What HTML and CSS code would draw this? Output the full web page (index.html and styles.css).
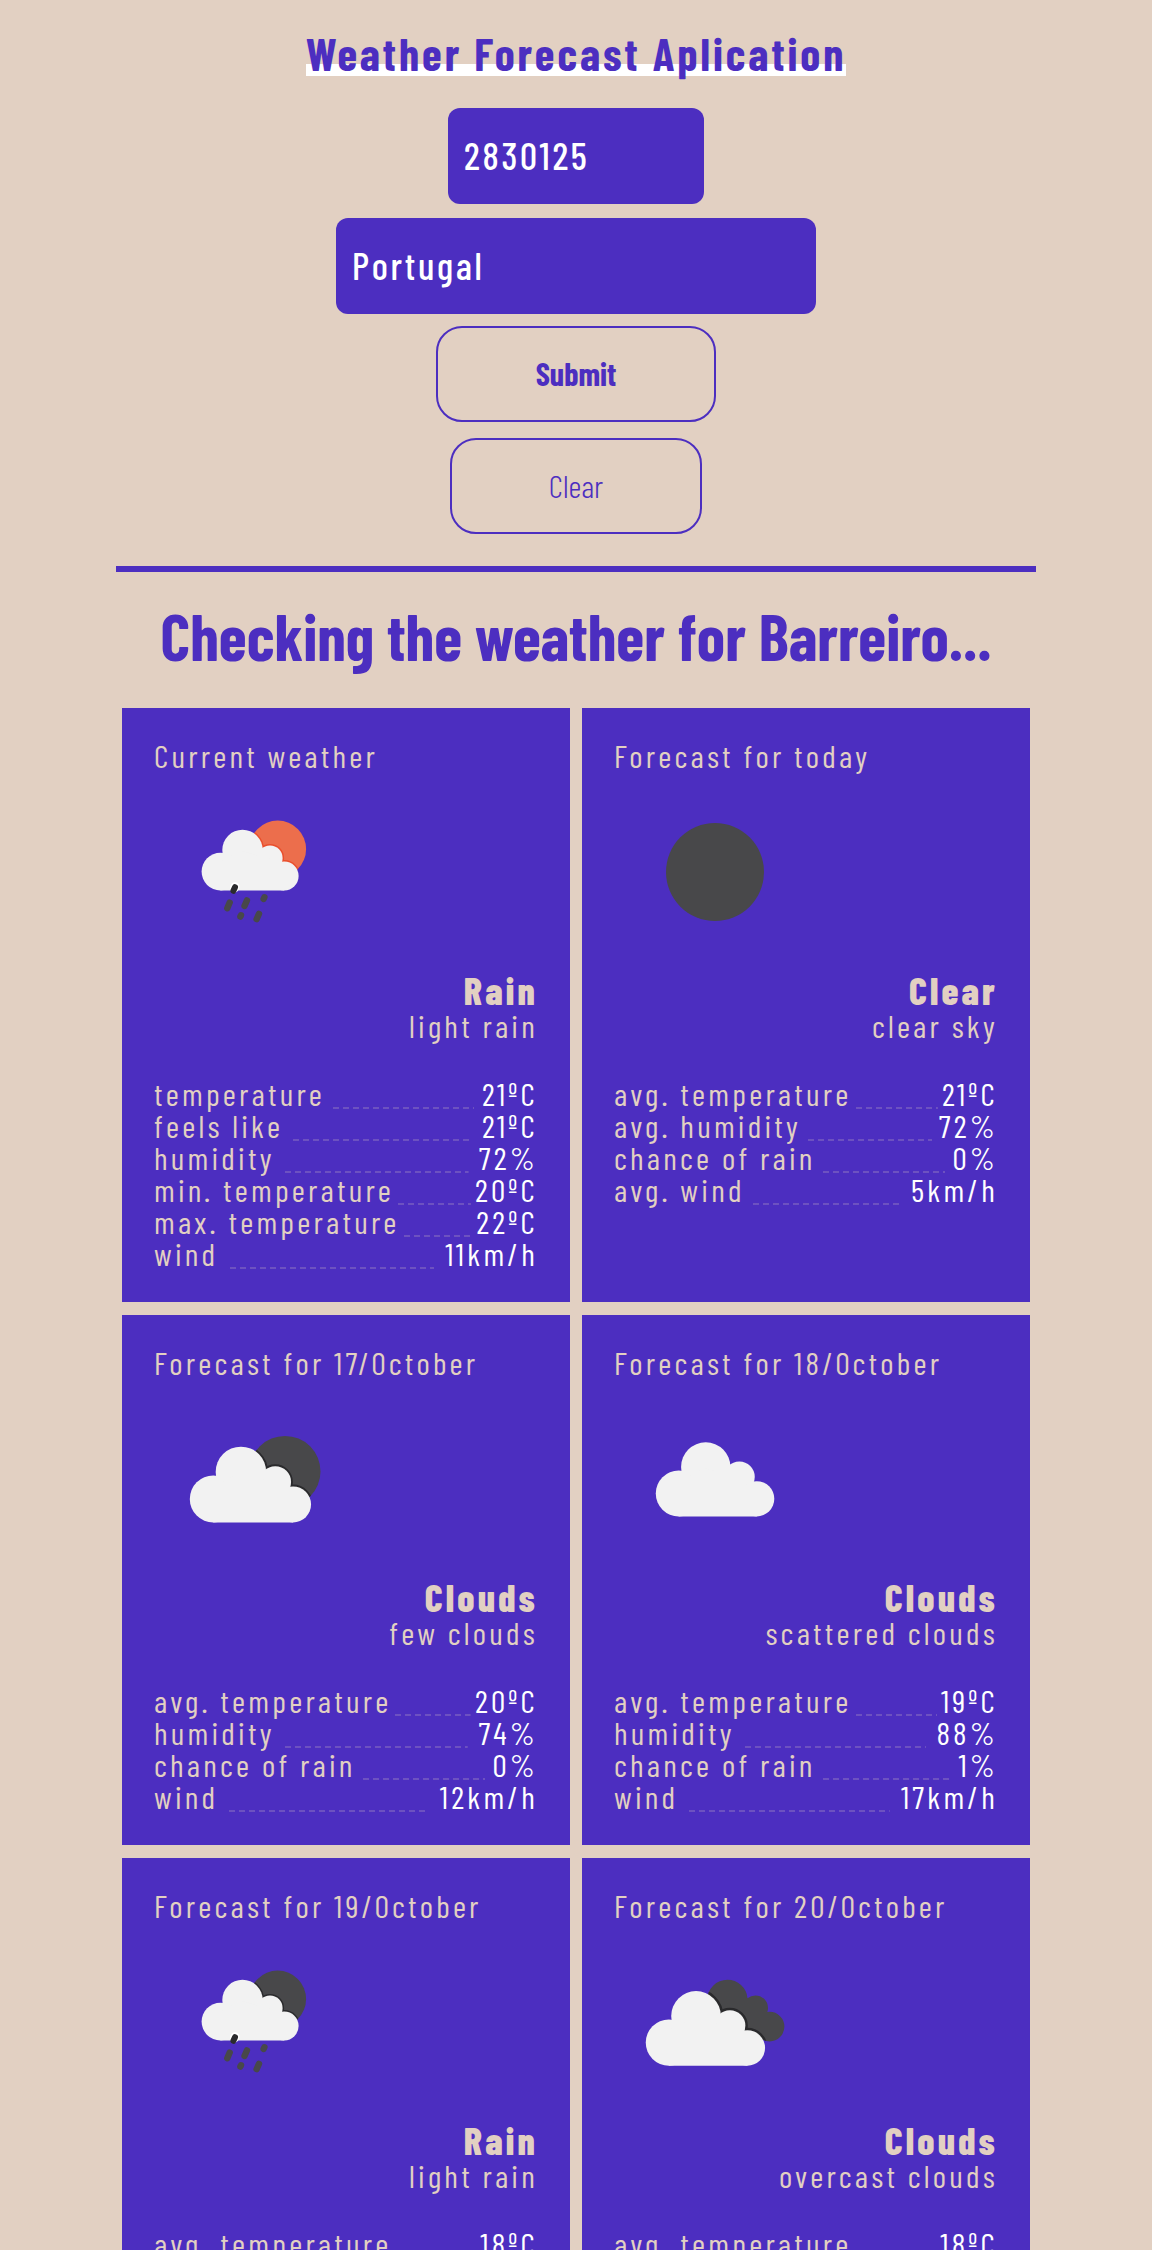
FILE: index.html
```
<!DOCTYPE html>
<html lang="en">
<head>
  <meta charset="utf-8">
  <meta name="viewport" content="width=device-width, initial-scale=1">
  <title>Weather Forecast Aplication</title>
  <link rel="stylesheet" href="styles.css">
</head>
<body>
  <svg class="defs" aria-hidden="true">
    <defs>
      <g id="cloud">
        <circle cx="66.4" cy="100.6" r="18.8"/>
        <circle cx="88.5" cy="79" r="20.2"/>
        <circle cx="116" cy="87" r="12.6"/>
        <circle cx="130.2" cy="105" r="14.4"/>
        <path d="M66.4 119.4V90L88 80L116 88L130.2 100V119.4Z"/>
      </g>
      <g id="drops" fill="none" stroke="#48484a" stroke-width="6.4" stroke-linecap="round">
        <path stroke="#fff" stroke-width="9" d="M81 115.6l-.6 1.4"/>
        <path stroke="#2a2a2c" stroke-width="6" d="M81 116.2l-1.6 3.6"/>
        <path d="M75.7 131.6l-2.4 5.6M92.9 129.4l-2.4 5.6M110.4 126.2l-.8 1.8M87 144.2l-.6 1.4M105 142.8l-2.4 5.4"/>
      </g>
      <clipPath id="sun-small"><circle cx="123.7" cy="78" r="28.4"/></clipPath>
      <clipPath id="sun-large"><circle cx="131" cy="93.4" r="35.5"/></clipPath>
      <clipPath id="cloud-back">
        <circle cx="113.4" cy="79" r="20.2"/><circle cx="141.4" cy="87" r="12.6"/><circle cx="155.6" cy="105.6" r="14.8"/>
        <path d="M91 119V90L113 80L141 88L155 100V119Z"/>
      </clipPath>
    </defs>
  </svg>

  <header class="header">
    <h1 class="title"><span class="title-mark">Weather Forecast Aplication</span></h1>
    <form class="search">
      <div class="fields">
        <input class="field field-code" type="text" name="code" value="2830125" aria-label="Postal code">
        <input class="field field-country" type="text" name="country" value="Portugal" aria-label="Country">
      </div>
      <div class="buttons">
        <button class="button button-submit" type="button">Submit</button>
        <button class="button button-clear" type="button">Clear</button>
      </div>
    </form>
  </header>

  <main class="main">
    <h2 class="heading">Checking the weather for Barreiro...</h2>
    <div class="cards">
      <article class="card">
        <h3 class="card-title">Current weather</h3>
        <svg class="icon" viewBox="0 0 200 200" role="img" aria-label="Rain by day">
          <circle cx="123.7" cy="78" r="28.4" fill="#ec6e4c"/>
          <g clip-path="url(#sun-small)"><use href="#cloud" fill="#ea4f2c" stroke="#ea4f2c" stroke-width="3"/></g>
          <use href="#cloud" fill="#f2f2f2"/>
          <use href="#drops"/>
        </svg>
        <p class="condition">Rain</p>
        <p class="description">light rain</p>
        <dl class="facts">
          <div class="fact"><dt>temperature</dt><dd>21ºC</dd></div>
          <div class="fact"><dt>feels like</dt><dd>21ºC</dd></div>
          <div class="fact"><dt>humidity</dt><dd>72%</dd></div>
          <div class="fact"><dt>min. temperature</dt><dd>20ºC</dd></div>
          <div class="fact"><dt>max. temperature</dt><dd>22ºC</dd></div>
          <div class="fact"><dt>wind</dt><dd>11km/h</dd></div>
        </dl>
      </article>

      <article class="card">
        <h3 class="card-title">Forecast for today</h3>
        <svg class="icon" viewBox="0 0 200 200" role="img" aria-label="Clear night">
          <circle cx="101" cy="101" r="49" fill="#48484a"/>
        </svg>
        <p class="condition">Clear</p>
        <p class="description">clear sky</p>
        <dl class="facts">
          <div class="fact"><dt>avg. temperature</dt><dd>21ºC</dd></div>
          <div class="fact"><dt>avg. humidity</dt><dd>72%</dd></div>
          <div class="fact"><dt>chance of rain</dt><dd>0%</dd></div>
          <div class="fact"><dt>avg. wind</dt><dd>5km/h</dd></div>
        </dl>
      </article>

      <article class="card">
        <h3 class="card-title">Forecast for 17/October</h3>
        <svg class="icon" viewBox="0 0 200 200" role="img" aria-label="Few clouds">
          <circle cx="131" cy="93.4" r="35.5" fill="#48484a"/>
          <g clip-path="url(#sun-large)"><use href="#cloud" transform="translate(-23.7 -4.8) scale(1.25)" fill="#2a2a2c" stroke="#2a2a2c" stroke-width="3"/></g>
          <use href="#cloud" transform="translate(-23.7 -4.8) scale(1.25)" fill="#f2f2f2"/>
        </svg>
        <p class="condition">Clouds</p>
        <p class="description">few clouds</p>
        <dl class="facts">
          <div class="fact"><dt>avg. temperature</dt><dd>20ºC</dd></div>
          <div class="fact"><dt>humidity</dt><dd>74%</dd></div>
          <div class="fact"><dt>chance of rain</dt><dd>0%</dd></div>
          <div class="fact"><dt>wind</dt><dd>12km/h</dd></div>
        </dl>
      </article>

      <article class="card">
        <h3 class="card-title">Forecast for 18/October</h3>
        <svg class="icon" viewBox="0 0 200 200" role="img" aria-label="Scattered clouds">
          <use href="#cloud" transform="translate(-16.4 -7.5) scale(1.222)" fill="#f2f2f2"/>
        </svg>
        <p class="condition">Clouds</p>
        <p class="description">scattered clouds</p>
        <dl class="facts">
          <div class="fact"><dt>avg. temperature</dt><dd>19ºC</dd></div>
          <div class="fact"><dt>humidity</dt><dd>88%</dd></div>
          <div class="fact"><dt>chance of rain</dt><dd>1%</dd></div>
          <div class="fact"><dt>wind</dt><dd>17km/h</dd></div>
        </dl>
      </article>

      <article class="card">
        <h3 class="card-title">Forecast for 19/October</h3>
        <svg class="icon" viewBox="0 0 200 200" role="img" aria-label="Rain by night">
          <circle cx="123.7" cy="78" r="28.4" fill="#48484a"/>
          <g clip-path="url(#sun-small)"><use href="#cloud" fill="#2a2a2c" stroke="#2a2a2c" stroke-width="3"/></g>
          <use href="#cloud" fill="#f2f2f2"/>
          <use href="#drops"/>
        </svg>
        <p class="condition">Rain</p>
        <p class="description">light rain</p>
        <dl class="facts">
          <div class="fact"><dt>avg. temperature</dt><dd>18ºC</dd></div>
        </dl>
      </article>

      <article class="card">
        <h3 class="card-title">Forecast for 20/October</h3>
        <svg class="icon" viewBox="0 0 200 200" role="img" aria-label="Overcast clouds">
          <g clip-path="url(#cloud-back)">
            <rect width="200" height="200" fill="#48484a"/>
            <use href="#cloud" transform="translate(-26.8 -2.2) scale(1.23)" fill="#2a2a2c" stroke="#2a2a2c" stroke-width="4"/>
          </g>
          <use href="#cloud" transform="translate(-26.8 -2.2) scale(1.23)" fill="#f2f2f2"/>
        </svg>
        <p class="condition">Clouds</p>
        <p class="description">overcast clouds</p>
        <dl class="facts">
          <div class="fact"><dt>avg. temperature</dt><dd>18ºC</dd></div>
        </dl>
      </article>
    </div>
  </main>
</body>
</html>
```
FILE: styles.css
```
:root {
  --sand: #e2d0c2;
  --violet: #4c2ec0;
}

* {
  box-sizing: border-box;
  margin: 0;
}

body {
  background: var(--sand);
  color: var(--violet);
  font-family: "Barlow Condensed", "Roboto Condensed", sans-serif;
  font-size: 32px;
  line-height: 32px;
}

.defs {
  display: block;
  width: 0;
  height: 0;
}

.header,
.main {
  width: 80%;
  max-width: 920px;
  margin: 0 auto;
}

.header {
  display: flex;
  flex-direction: column;
  align-items: center;
  padding: 26px 0 32px;
  border-bottom: 6px solid var(--violet);
}

.title {
  font-size: 45px;
  font-weight: 700;
  line-height: 54px;
  letter-spacing: 3px;
}

.title-mark {
  background: linear-gradient(#fff, #fff) 0 38px / 100% 12px no-repeat;
}

.search,
.fields,
.buttons {
  display: flex;
  flex-direction: column;
  align-items: center;
  width: 100%;
}

.search {
  gap: 12px;
  padding-top: 28px;
}

.fields {
  gap: 14px;
}

.buttons {
  gap: 16px;
}

.field {
  max-width: 100%;
  height: 96px;
  padding: 0 16px 2px;
  border: 0;
  border-radius: 12px;
  background: var(--violet);
  color: #fff;
  font-family: inherit;
  font-size: 38px;
  font-weight: 500;
  letter-spacing: 0.07em;
}

.field-code {
  width: 256px;
}

.field-country {
  width: 480px;
}

.button {
  height: 96px;
  padding-bottom: 4px;
  border: 2px solid var(--violet);
  border-radius: 26px;
  background: transparent;
  color: inherit;
  font-family: inherit;
  font-size: 32px;
}

.button-submit {
  width: 280px;
  font-weight: 700;
}

.button-clear {
  width: 252px;
  font-weight: 300;
}

.main {
  padding: 0 6px;
}

.heading {
  padding: 24px 0 32px;
  font-size: 64px;
  font-weight: 700;
  line-height: 80px;
  text-align: center;
}

.cards {
  display: grid;
  grid-template-columns: 1fr 1fr;
  gap: 13px 12px;
}

.card {
  padding: 31px 32px 33px;
  background: var(--violet);
  color: var(--sand);
  letter-spacing: 0.1em;
}

.card-title {
  font-size: 32px;
  font-weight: 400;
}

.icon {
  display: block;
  width: 200px;
  height: 200px;
}

.condition {
  font-size: 38px;
  font-weight: 800;
  line-height: 38px;
  text-align: right;
}

.description {
  text-align: right;
}

.facts {
  padding-top: 36px;
}

.fact {
  display: flex;
}

.fact dt {
  display: flex;
  flex: 1;
}

/* Dashed leader between the label and its value */
.fact dt::after {
  content: "";
  flex: 1;
  height: 2px;
  margin-top: 30px;
  background: repeating-linear-gradient(90deg, rgba(226, 208, 194, 0.22) 0 6px, transparent 6px 10px) center / 90% 2px no-repeat;
}

.fact dd {
  color: #fff;
}
```
